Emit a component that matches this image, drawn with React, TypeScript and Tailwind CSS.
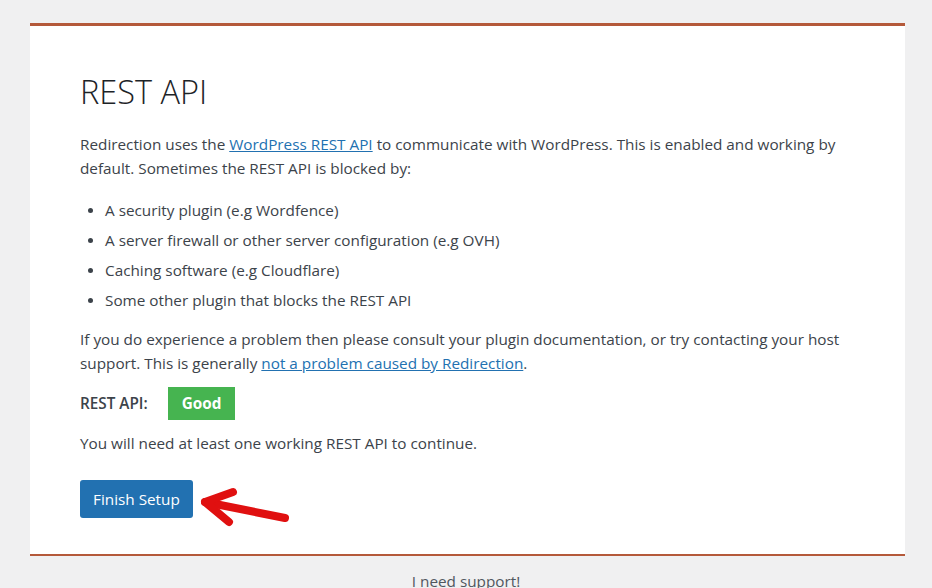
import React from "react";

const font = { fontFamily: '"Open Sans", "Noto Sans", sans-serif' };

function Arrow() {
  return (
    <svg width="100" height="44" viewBox="0 0 100 44" className="ml-[6px] mt-[4px]">
      <g stroke="#e01010" strokeWidth="8" strokeLinecap="round" strokeLinejoin="round" fill="none">
        <path d="M86 34 L6 18" />
        <path d="M34 8 L6 18 L30 38" />
      </g>
    </svg>
  );
}

export default function App() {
  return (
    <div className="min-h-[588px] bg-[#f0f0f1] pt-[23px] text-[15.3px] text-[#3c434a]" style={font}>
      <div className="ml-[30px] mr-[27px] border-t-[3px] border-b-2 border-[#b4593a] bg-white pl-[50px] pr-[40px] pb-[26px] pt-[42px]">
        <h1 className="text-[32.5px] font-light leading-[48px] text-[#1d2327]">REST API</h1>
        <p className="mt-[16px] leading-[24px]">
          Redirection uses the{" "}
          <a className="text-[#2271b1] underline">WordPress REST API</a> to communicate with WordPress. This is
          enabled and working by default. Sometimes the REST API is blocked by:
        </p>
        <ul className="mt-[15px] pl-[25px]">
          {[
            "A security plugin (e.g Wordfence)",
            "A server firewall or other server configuration (e.g OVH)",
            "Caching software (e.g Cloudflare)",
            "Some other plugin that blocks the REST API",
          ].map((t) => (
            <li key={t} className="relative leading-[30px]">
              <span className="absolute -left-[17px] top-[13px] h-[5px] w-[5px] rounded-full bg-[#3c434a]" />
              {t}
            </li>
          ))}
        </ul>
        <p className="mt-[12px] leading-[24px]">
          If you do experience a problem then please consult your plugin documentation, or try contacting your host
          support. This is generally <a className="text-[#2271b1] underline">not a problem caused by Redirection</a>.
        </p>
        <div className="mt-[12px] flex items-center">
          <span className="w-[88px] font-semibold">REST API:</span>
          <span className="flex h-[33px] w-[67px] items-center justify-center bg-[#46b450] font-bold text-white">
            Good
          </span>
        </div>
        <p className="mt-[11px] leading-[24px]">You will need at least one working REST API to continue.</p>
        <div className="mt-[25px] flex items-start">
          <button className="h-[38px] rounded-[3px] bg-[#2271b1] px-[13px] text-white" style={font}>
            Finish Setup
          </button>
          <Arrow />
        </div>
      </div>
      <div className="pt-[14px] text-center text-[#50575e]">
        <a className="underline">I need support!</a>
      </div>
    </div>
  );
}
